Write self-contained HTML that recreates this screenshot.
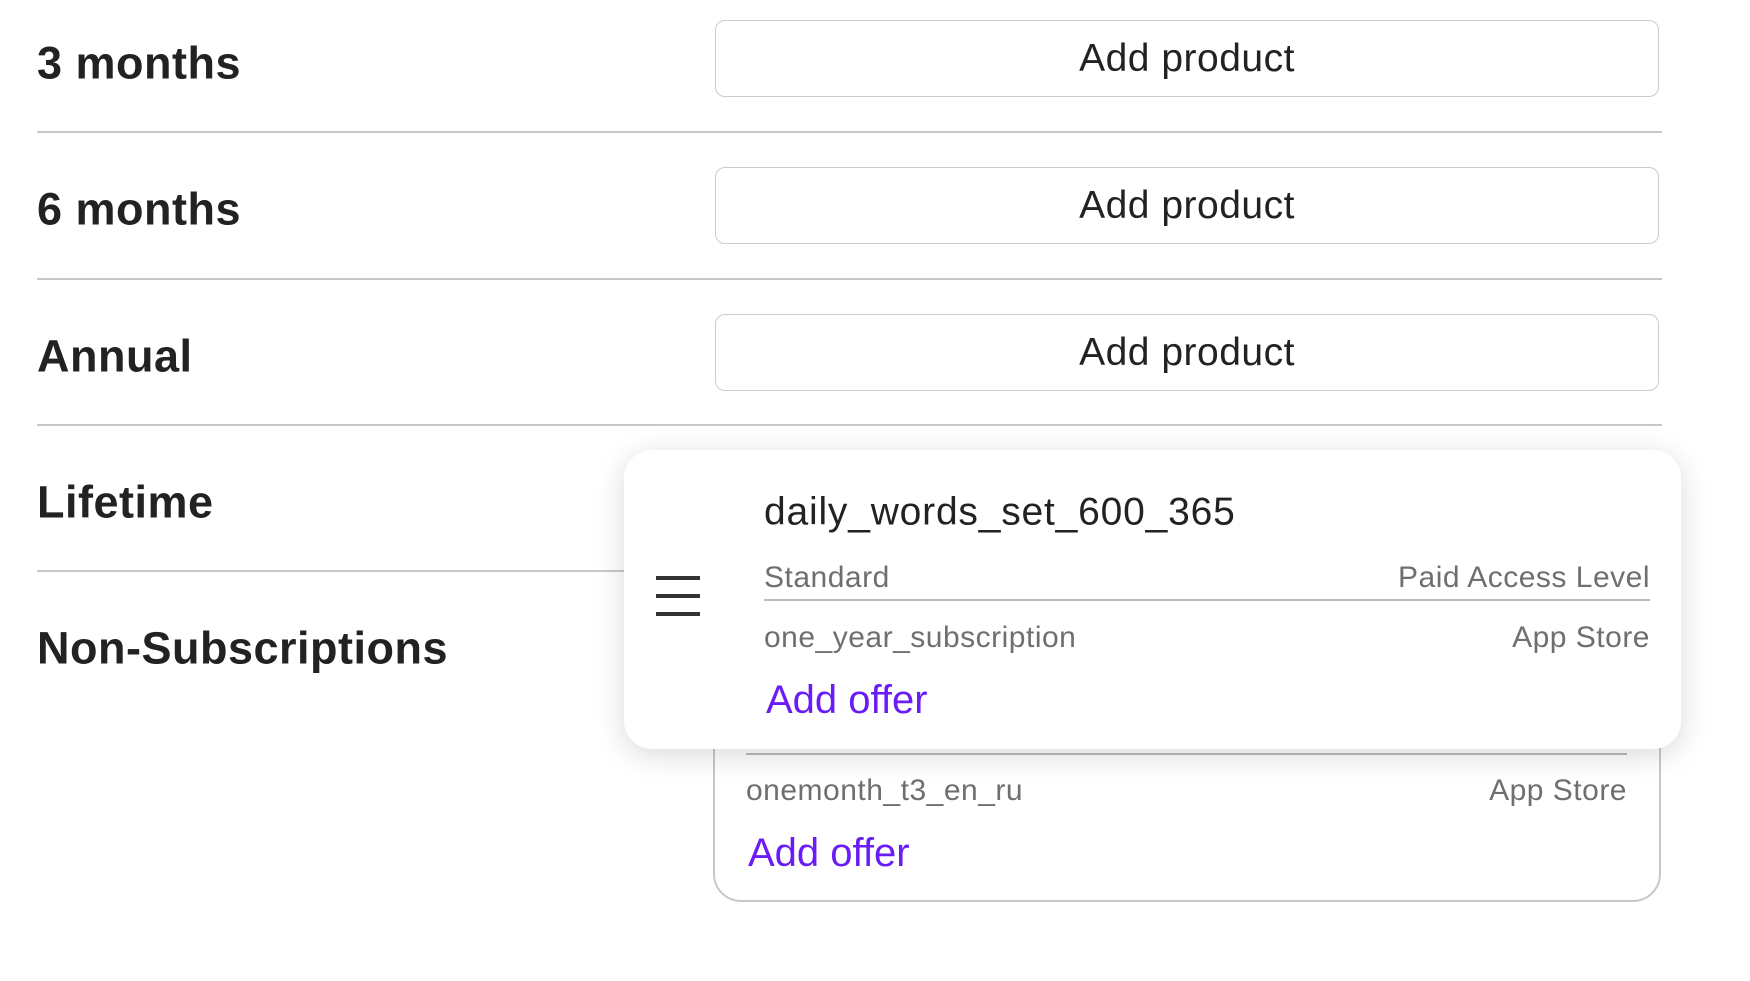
<!DOCTYPE html>
<html><head><style>
body{margin:0;width:1750px;height:981px;background:#fff;position:relative;overflow:hidden;font-family:"Liberation Sans",sans-serif;color:#222}
.lbl{position:absolute;left:37px;font-size:45px;font-weight:bold;line-height:1;transform:translateY(-50%);letter-spacing:0.5px}
.btn{position:absolute;left:715px;width:944px;height:77px;border:1.5px solid #ccc;border-radius:10px;box-sizing:border-box;font-size:39px;display:flex;align-items:center;justify-content:center;color:#222;letter-spacing:0.5px}
.hr{position:absolute;left:37px;width:1625px;height:2px;background:#c8c8c8}
.t{position:absolute;line-height:1;transform:translateY(-50%);white-space:nowrap}
.g{color:#6f6f6f;font-size:30px;letter-spacing:0.5px}
.p{color:#6a1cf6;font-size:40px}
</style></head><body>
<div class="lbl" style="top:63px">3 months</div>
<div class="btn" style="top:20px">Add product</div>
<div class="hr" style="top:131px"></div>
<div class="lbl" style="top:209px">6 months</div>
<div class="btn" style="top:167px">Add product</div>
<div class="hr" style="top:278px"></div>
<div class="lbl" style="top:356px">Annual</div>
<div class="btn" style="top:314px">Add product</div>
<div class="hr" style="top:424px"></div>
<div class="lbl" style="top:502px">Lifetime</div>
<div class="hr" style="top:570px"></div>
<div class="lbl" style="top:648px">Non-Subscriptions</div>

<div style="position:absolute;left:713px;top:692px;width:948px;height:210px;border:2px solid #c8c8c8;border-radius:28px;box-sizing:border-box"></div>
<div style="position:absolute;left:746px;top:753px;width:881px;height:2px;background:#bbb"></div>
<div class="t g" style="left:746px;top:791px">onemonth_t3_en_ru</div>
<div class="t g" style="right:123px;top:791px">App Store</div>
<div class="t p" style="left:748px;top:853px">Add offer</div>

<div style="position:absolute;left:624px;top:450px;width:1057px;height:299px;background:#fff;border-radius:28px;box-shadow:0 6px 30px rgba(0,0,0,0.15)"></div>
<div style="position:absolute;left:656px;top:576px;width:44px;height:4px;background:#333"></div>
<div style="position:absolute;left:656px;top:594px;width:44px;height:4px;background:#333"></div>
<div style="position:absolute;left:656px;top:612px;width:44px;height:4px;background:#333"></div>
<div class="t" style="left:764px;top:512px;font-size:39px;color:#222;letter-spacing:0.8px">daily_words_set_600_365</div>
<div class="t g" style="left:764px;top:578px">Standard</div>
<div class="t g" style="right:100px;top:578px">Paid Access Level</div>
<div style="position:absolute;left:764px;top:599px;width:886px;height:2px;background:#bbb"></div>
<div class="t g" style="left:764px;top:638px">one_year_subscription</div>
<div class="t g" style="right:100px;top:638px">App Store</div>
<div class="t p" style="left:766px;top:700px">Add offer</div>
</body></html>
